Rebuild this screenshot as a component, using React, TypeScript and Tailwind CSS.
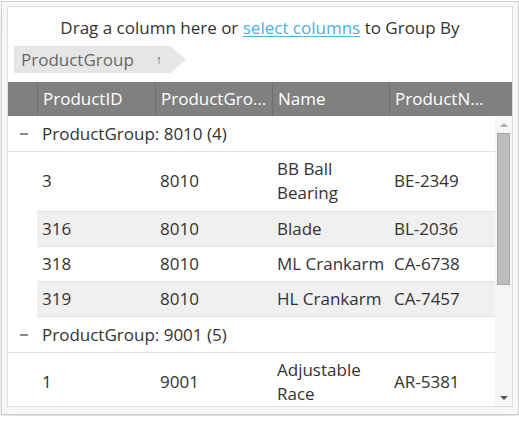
import React from 'react'

type Row = { id: string; group: string; name: string[]; number: string }

const groups: { key: string; count: number; rows: Row[] }[] = [
  {
    key: '8010',
    count: 4,
    rows: [
      { id: '3', group: '8010', name: ['BB Ball', 'Bearing'], number: 'BE-2349' },
      { id: '316', group: '8010', name: ['Blade'], number: 'BL-2036' },
      { id: '318', group: '8010', name: ['ML Crankarm'], number: 'CA-6738' },
      { id: '319', group: '8010', name: ['HL Crankarm'], number: 'CA-7457' },
    ],
  },
  {
    key: '9001',
    count: 5,
    rows: [{ id: '1', group: '9001', name: ['Adjustable', 'Race'], number: 'AR-5381' }],
  },
]

const classes = {
  headCell: 'px-[5px] border-l border-[#6f6f6f] flex items-center whitespace-nowrap overflow-hidden',
  cell: 'px-[5px] flex items-center whitespace-nowrap',
}

function GroupRow({ label }: { label: string }) {
  return (
    <div className="flex h-[36px] border-b border-[#e3e3e3] items-center">
      <div className="w-[29px] flex justify-center pl-[2px]">
        <div className="w-[8px] h-[2px] bg-[#8a8a8a]" />
      </div>
      <div className="px-[5px]">{label}</div>
    </div>
  )
}

function DataRow({ row, alt }: { row: Row; alt: boolean }) {
  const tall = row.name.length > 1
  return (
    <div className="flex">
      <div className="w-[29px] shrink-0 bg-white" />
      <div
        className={`flex flex-1 border-b border-[#e3e3e3] ${tall ? 'pt-[5px] pb-[6px]' : 'py-[5px]'} ${
          alt ? 'bg-[#f0f0f0]' : 'bg-white'
        }`}
      >
        <div className={`${classes.cell} w-[118px]`}>{row.id}</div>
        <div className={`${classes.cell} w-[117px]`}>{row.group}</div>
        <div className={`${classes.cell} w-[117px] flex-col items-start justify-center`}>
          {row.name.map((n) => (
            <span key={n}>{n}</span>
          ))}
        </div>
        <div className={`${classes.cell} flex-1`}>{row.number}</div>
      </div>
    </div>
  )
}

function Scrollbar() {
  return (
    <div className="w-[17px] shrink-0 bg-[#f6f6f6] flex flex-col items-center">
      <div className="h-[17px] shrink-0 flex items-center justify-center">
        <div className="w-0 h-0 border-x-[4px] border-x-transparent border-b-[4px] border-b-[#b0b0b0]" />
      </div>
      <div className="w-[13px] h-[152px] shrink-0 bg-[#bcbcbc] border border-[#a6a6a6]" />
      <div className="flex-1" />
      <div className="h-[17px] shrink-0 flex items-center justify-center">
        <div className="w-0 h-0 border-x-[4px] border-x-transparent border-t-[4px] border-t-[#555]" />
      </div>
    </div>
  )
}

export default function App() {
  return (
    <div className="p-px font-['Segoe_UI','Open_Sans',sans-serif] text-[17px] leading-[24px] text-[#333]">
      <div className="w-[518px] h-[414px] border border-[#cfcfcf] bg-[#f7f7f7] px-[5px] pt-[4px] pb-[7px] shadow-[0_10px_14px_rgba(0,0,0,0.14)]">
        <div className="h-full border border-[#dedede] bg-[linear-gradient(160deg,#ffffff_40%,#f3f3f3)] flex flex-col">
          <div className="h-[75px] shrink-0 flex flex-col">
            <div className="pt-[9px] text-center text-[#333]">
              Drag a column here or{' '}
              <span className="text-[#4ab0e8] underline underline-offset-2">select columns</span> to Group By
            </div>
            <div className="mt-[6px] ml-[6px] flex">
              <div className="h-[27px] w-[172px] bg-[#e6e6e6] text-[#666] flex items-center pl-[7px] [clip-path:polygon(0_0,156px_0,100%_50%,156px_100%,0_100%)]">
                <span>ProductGroup</span>
                <span className="ml-[22px] text-[12px] text-[#555] font-bold">↑</span>
              </div>
            </div>
          </div>
          <div className="h-[34px] bg-[#808080] text-white flex shrink-0">
            <div className="w-[29px]" />
            <div className={`${classes.headCell} w-[118px]`}>ProductID</div>
            <div className={`${classes.headCell} w-[117px]`}>ProductGro…</div>
            <div className={`${classes.headCell} w-[117px]`}>Name</div>
            <div className={`${classes.headCell} flex-1`}>ProductN…</div>
          </div>
          <div className="flex flex-1 min-h-0">
            <div className="flex-1 overflow-hidden bg-white">
              {groups.map((g) => (
                <React.Fragment key={g.key}>
                  <GroupRow label={`ProductGroup: ${g.key} (${g.count})`} />
                  {g.rows.map((r, i) => (
                    <DataRow key={r.id} row={r} alt={i % 2 === 1} />
                  ))}
                </React.Fragment>
              ))}
            </div>
            <Scrollbar />
          </div>
        </div>
      </div>
    </div>
  )
}
